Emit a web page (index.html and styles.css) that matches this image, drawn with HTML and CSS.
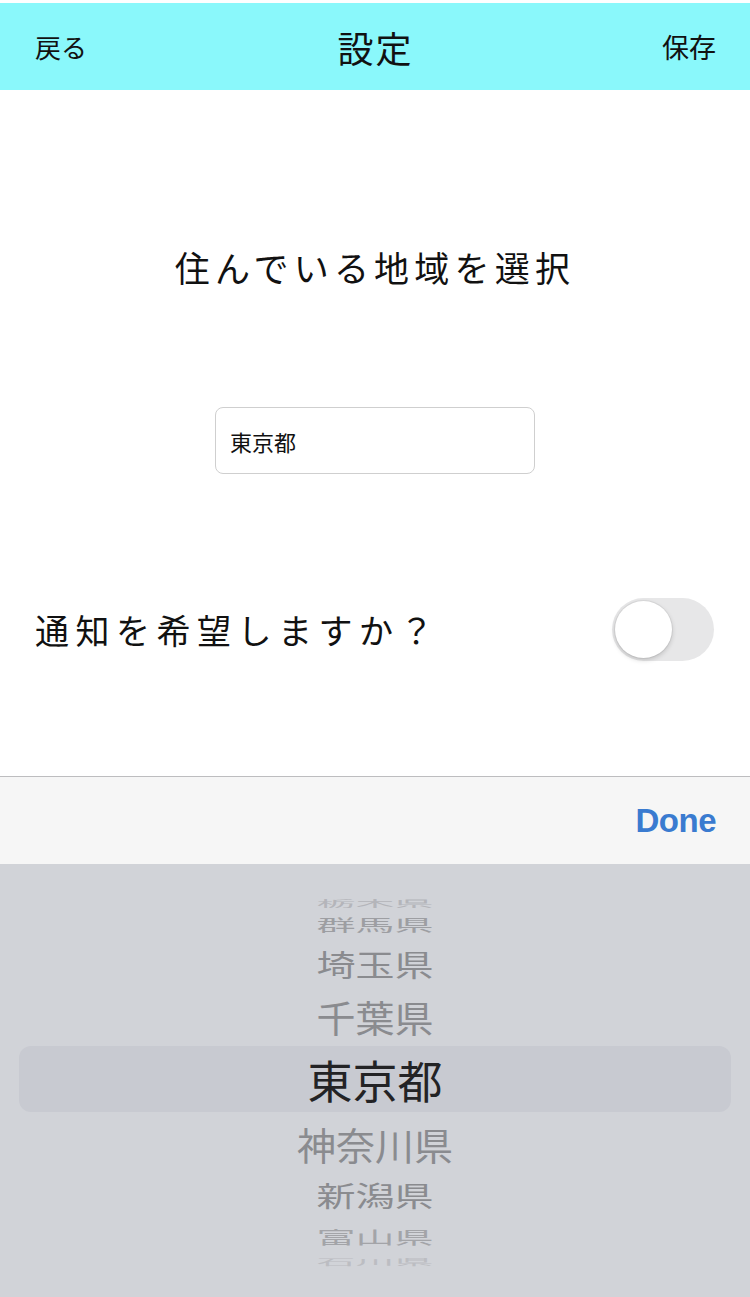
FILE: index.html
```html
<!DOCTYPE html>
<html lang="ja">
<head>
    <meta charset="UTF-8">
    <meta name="viewport" content="width=device-width, initial-scale=1.0">
    <title>設定</title>
    <link rel="stylesheet" href="styles.css">
</head>
<body>
    <div class="screen">
        <!-- Navigation bar -->
        <header class="navbar">
            <span class="nav-left">戻る</span>
            <h1 class="nav-title">設定</h1>
            <span class="nav-right">保存</span>
        </header>

        <!-- Settings -->
        <main class="content">
            <h2 class="region-title">住んでいる地域を選択</h2>
            <div class="region-field">東京都</div>

            <div class="notify-row">
                <span class="notify-label">通知を希望しますか？</span>
                <div class="switch"><div class="knob"></div></div>
            </div>
        </main>

        <!-- Picker keyboard -->
        <div class="picker-toolbar">
            <span class="done">Done</span>
        </div>
        <div class="picker">
            <div class="row r-edge"><span>栃木県</span></div>
            <div class="row r-far"><span>群馬県</span></div>
            <div class="row r-mid"><span>埼玉県</span></div>
            <div class="row r-near"><span>千葉県</span></div>
            <div class="row selected"><span>東京都</span></div>
            <div class="row r-near2"><span>神奈川県</span></div>
            <div class="row r-mid2"><span>新潟県</span></div>
            <div class="row r-far2"><span>富山県</span></div>
            <div class="row r-edge2"><span>石川県</span></div>
        </div>
    </div>
</body>
</html>
```

FILE: styles.css
```css
body {
    margin: 0;
    background-color: #ffffff;
    font-family: "Noto Sans CJK JP", "Noto Sans", sans-serif;
    color: #111;
}
.screen {
    width: 750px;
    height: 1297px;
    display: flex;
    flex-direction: column;
    overflow: hidden;
}

/* Navigation bar */
.navbar {
    margin-top: 3px;
    height: 87px;
    background-color: #8af8fb;
    display: grid;
    grid-template-columns: 1fr auto 1fr;
    align-items: center;
    padding: 0 34px 0 35px;
}
.nav-left {
    font-size: 26px;
    justify-self: start;
}
.nav-title {
    margin: 0;
    font-size: 36px;
    font-weight: normal;
    letter-spacing: 2px;
}
.nav-right {
    font-size: 27px;
    justify-self: end;
}

/* Content */
.content {
    height: 686px;
    display: flex;
    flex-direction: column;
    align-items: center;
}
.region-title {
    margin: 152px 0 0;
    font-size: 35px;
    font-weight: normal;
    letter-spacing: 5.2px;
    line-height: 50px;
}
.region-field {
    margin-top: 115px;
    width: 320px;
    height: 67px;
    box-sizing: border-box;
    border: 1px solid #cfcfcf;
    border-radius: 8px;
    padding: 0 14px;
    display: flex;
    align-items: center;
    font-size: 22px;
}
.notify-row {
    margin-top: 124px;
    width: 100%;
    box-sizing: border-box;
    padding: 0 36px 0 35px;
    display: flex;
    justify-content: space-between;
    align-items: center;
}
.notify-label {
    font-size: 34px;
    letter-spacing: 6.5px;
}
.switch {
    width: 102px;
    height: 63px;
    box-sizing: border-box;
    border-radius: 32px;
    background-color: #e7e7e8;
    padding: 3px;
    display: flex;
}
.knob {
    width: 57px;
    height: 57px;
    border-radius: 50%;
    background-color: #ffffff;
    box-shadow: 0 2px 5px rgba(0, 0, 0, 0.18), 0 0 0 1px rgba(0, 0, 0, 0.05);
}

/* Picker toolbar */
.picker-toolbar {
    height: 88px;
    box-sizing: border-box;
    border-top: 1px solid #bdbdbf;
    background-color: #f6f6f6;
    display: flex;
    justify-content: flex-end;
    align-items: center;
    padding-right: 34px;
}
.done {
    font-family: "Liberation Sans", Arial, sans-serif;
    font-weight: bold;
    font-size: 33px;
    color: #3a7bd0;
    letter-spacing: -0.5px;
}

/* Wheel */
.picker {
    flex: 1;
    background-color: #d1d3d8;
    display: flex;
    flex-direction: column;
    align-items: stretch;
    padding-top: 30px;
}
.row {
    display: flex;
    justify-content: center;
    align-items: center;
    overflow: hidden;
    color: #8a8b8f;
    font-size: 39px;
    line-height: 1;
}
.row span {
    display: inline-block;
}
.r-edge {
    height: 18px;
    color: #b4b5ba;
}
.r-edge span { transform: scaleY(0.22); }
.r-far {
    height: 24px;
    color: #9d9ea2;
}
.r-far span { transform: scaleY(0.42); }
.r-mid { height: 54px; }
.r-mid span { transform: scaleY(0.75); }
.r-near { height: 54px; }
.r-near span { transform: scaleY(0.95); }
.selected {
    height: 66px;
    margin: 2px 19px;
    border-radius: 12px;
    background-color: #c8cad1;
    color: #232325;
    font-size: 45px;
}
.r-near2 { height: 58px; }
.r-near2 span { transform: scaleY(0.97); }
.r-mid2 { height: 46px; }
.r-mid2 span { transform: scaleY(0.72); }
.r-far2 {
    height: 36px;
    color: #a3a4a8;
}
.r-far2 span { transform: scaleY(0.45); }
.r-edge2 {
    height: 14px;
    color: #bcbdc2;
}
.r-edge2 span { transform: scaleY(0.2); }
```
